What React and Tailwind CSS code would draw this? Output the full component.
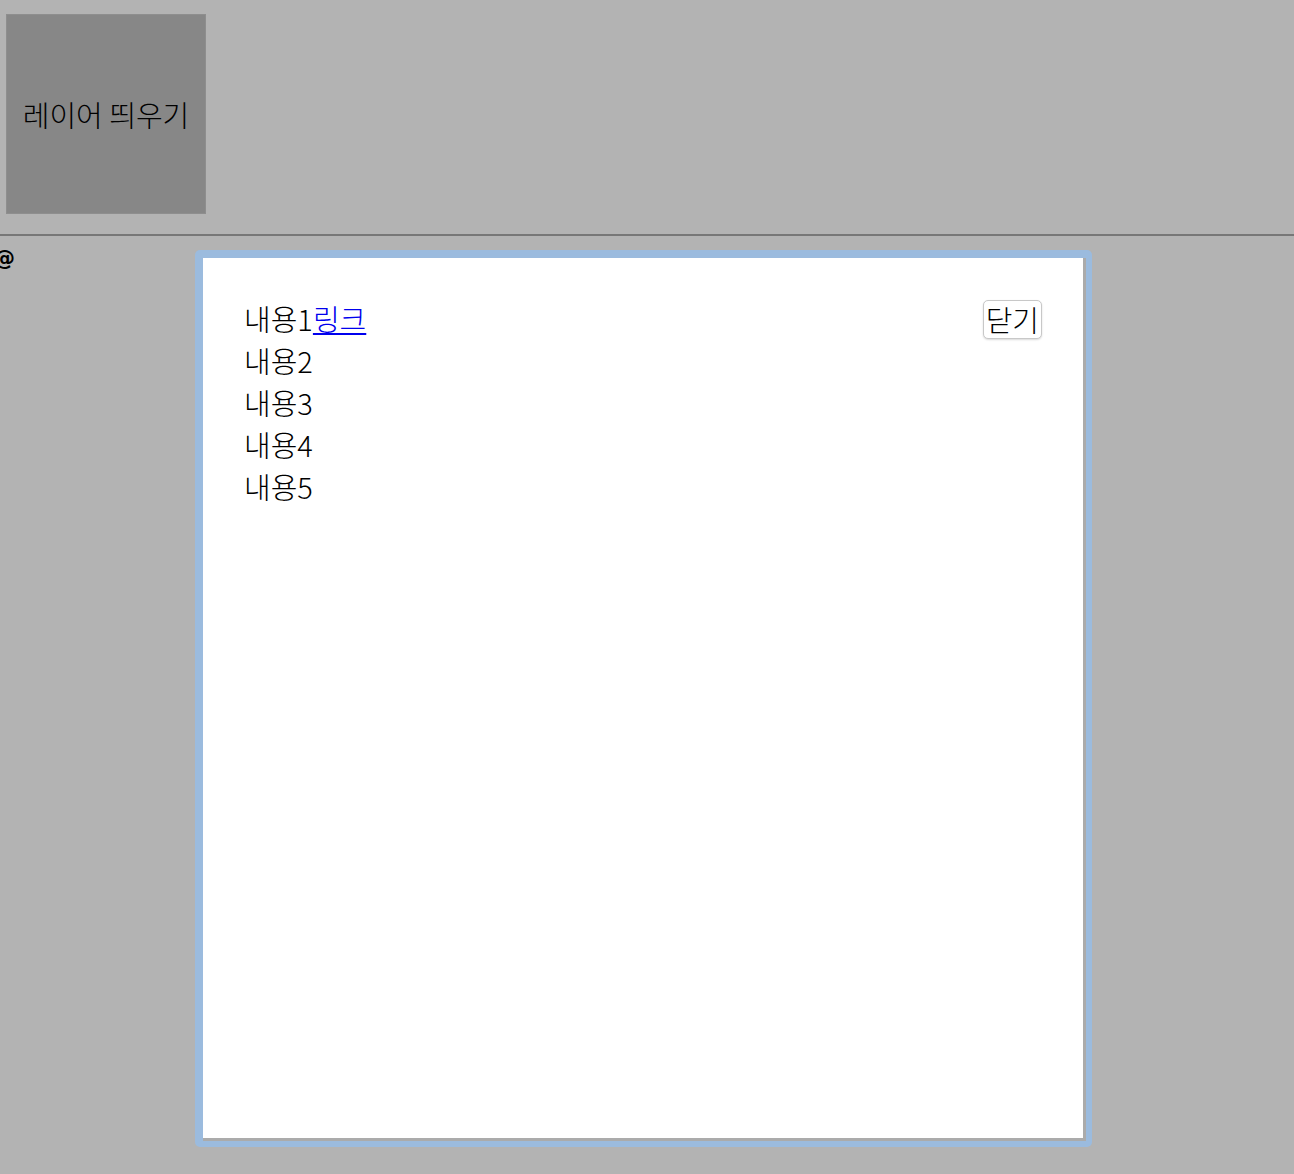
export default function App() {
  const font = { fontFamily: '"Noto Sans CJK KR", "Noto Sans", sans-serif' };
  return (
    <div className="relative min-h-[1174px] w-full bg-[#b3b3b3] text-black" style={font}>
      <div className="pl-[6px] pt-[14px] pb-[20px] border-b-2 border-[#777]">
        <button className="flex h-[200px] w-[200px] items-center justify-center border border-[#8e8e8e] bg-[#878787] text-[29px] font-light leading-none text-black">
          레이어 띄우기
        </button>
      </div>
      <div className="-ml-[6px] pt-[10px] text-[21px] font-bold leading-[24px]" style={{ fontFamily: '"DejaVu Sans", sans-serif' }}>@</div>
      <div className="absolute left-[195px] top-[250px] rounded-[5px] bg-[#9bbbde] pl-[8px] pt-[8px] pr-[6px] pb-[6px]">
        <div className="h-[883px] w-[883px] border-r-[3px] border-b-[3px] border-[#ababab] bg-white pl-[41px] pr-[41px] pt-[39px]">
          <div className="flex items-start justify-between">
            <div className="text-[29px] font-light leading-[42px]">
              <div>
                내용1<a href="#" className="text-[#0000ee] underline">링크</a>
              </div>
              <div>내용2</div>
              <div>내용3</div>
              <div>내용4</div>
              <div>내용5</div>
            </div>
            <button className="mt-[3px] flex h-[39px] items-center rounded-[5px] border border-[#c8c8c8] bg-white px-[2px] text-[29px] font-light leading-none shadow-[0_1px_2px_rgba(0,0,0,0.15)]">
              닫기
            </button>
          </div>
        </div>
      </div>
    </div>
  );
}
